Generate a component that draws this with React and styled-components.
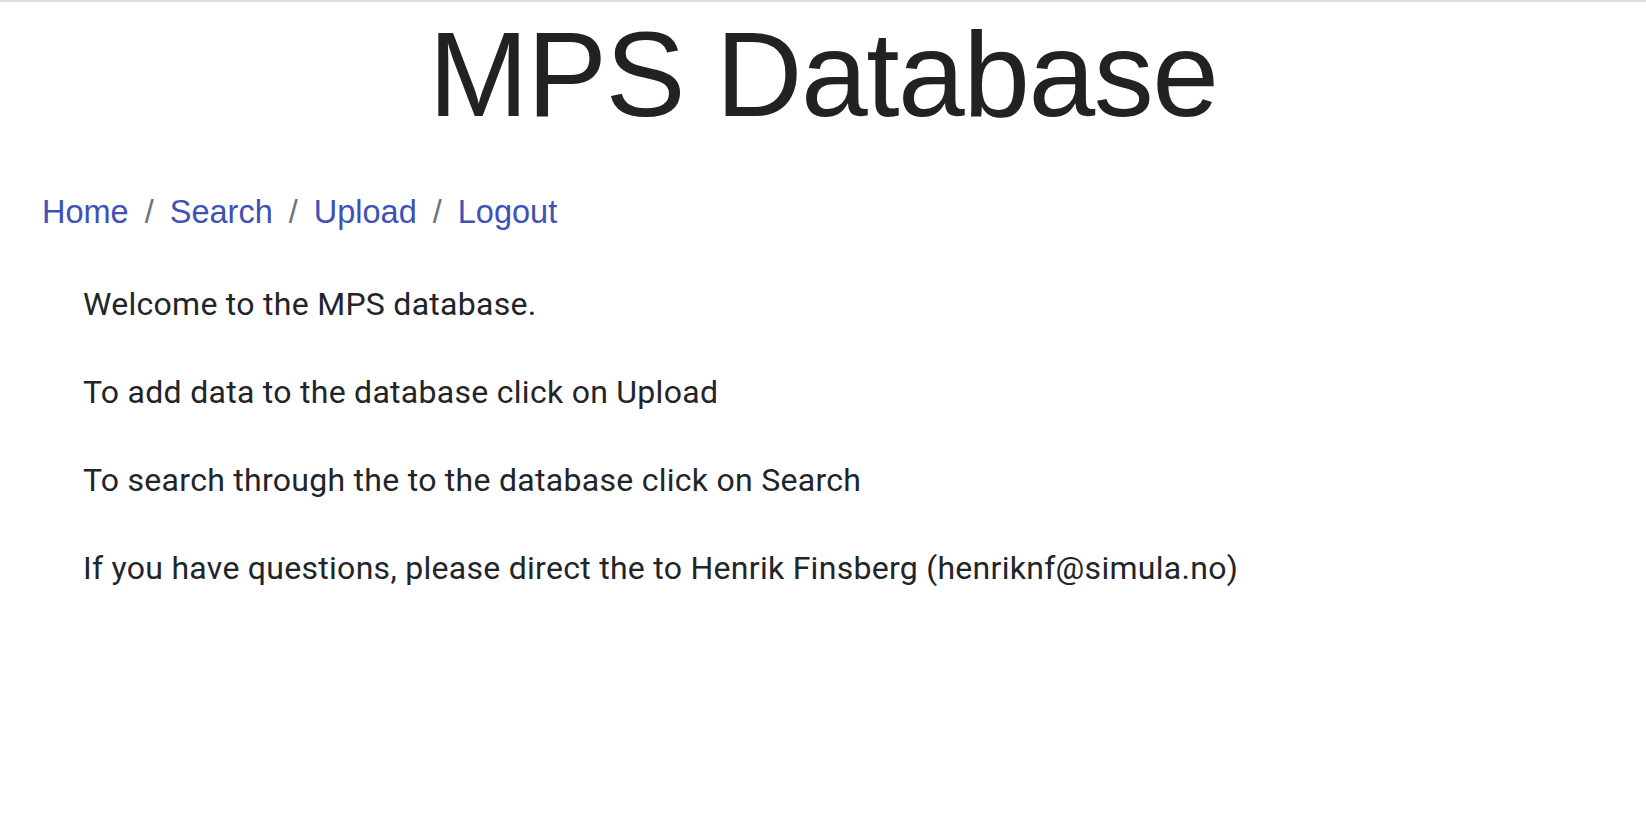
import React from "react";
import styled, { createGlobalStyle } from "styled-components";

const GlobalStyle = createGlobalStyle`
  html, body {
    margin: 0;
    padding: 0;
    background: #fff;
  }
  body {
    font-family: Roboto, "Liberation Sans", sans-serif;
    color: #212529;
  }
`;

const links = ["Home", "Search", "Upload", "Logout"];

const paragraphs = [
  "Welcome to the MPS database.",
  "To add data to the database click on Upload",
  "To search through the to the database click on Search",
  "If you have questions, please direct the to Henrik Finsberg (henriknf@simula.no)",
];

const App = () => {
  return (
    <Page>
      <GlobalStyle />
      <Title>MPS Database</Title>
      <Breadcrumb>
        {links.map((label, i) => (
          <Crumb key={label} first={i === 0}>
            <NavLink href="#">{label}</NavLink>
          </Crumb>
        ))}
      </Breadcrumb>
      <Content>
        {paragraphs.map((text) => (
          <Paragraph key={text}>{text}</Paragraph>
        ))}
      </Content>
    </Page>
  );
};

export default App;

const Page = styled.div`
  min-height: 826px;
  border-top: 2px solid #dcdcdc;
  box-sizing: border-box;
`;

const Title = styled.h1`
  margin: 0;
  text-align: center;
  font-family: "Liberation Sans", Arial, sans-serif;
  font-weight: 400;
  font-size: 120px;
  line-height: 144px;
  letter-spacing: -1.5px;
  color: #222;
`;

const Breadcrumb = styled.ol`
  display: flex;
  list-style: none;
  margin: 42px 0 0;
  padding: 0 42px;
  font-family: "Liberation Sans", Arial, sans-serif;
  font-size: 32.5px;
  line-height: 48px;
`;

const Crumb = styled.li`
  display: flex;

  &::before {
    content: ${({ first }) => (first ? "none" : '"/"')};
    color: #6c757d;
    padding: 0 16px;
  }
`;

const NavLink = styled.a`
  color: #3f51b5;
  text-decoration: none;
`;

const Content = styled.div`
  margin-top: 44px;
  padding: 0 83px;
`;

const Paragraph = styled.p`
  margin: 0 0 40px;
  font-size: 32px;
  line-height: 48px;
  letter-spacing: 0.28px;
`;
